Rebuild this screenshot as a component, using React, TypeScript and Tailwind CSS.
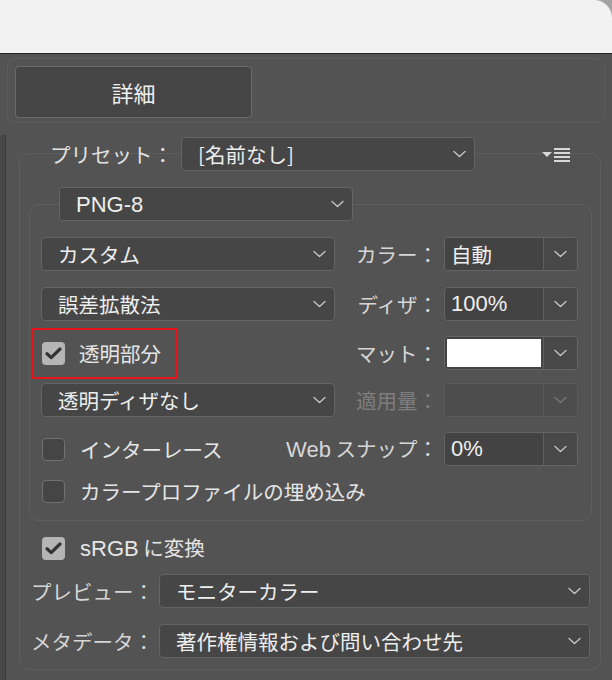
import React from "react";

const L = ({ children }: { children: React.ReactNode }) => (
  <span className="font-['Liberation_Sans',sans-serif] text-[22px]">{children}</span>
);

const Chevron = ({ className = "" }: { className?: string }) => (
  <svg width="13" height="8" viewBox="0 0 13 8" className={className}>
    <path d="M1 1.5 L6.5 6.5 L12 1.5" fill="none" stroke="currentColor" strokeWidth="1.4" strokeLinecap="round" strokeLinejoin="round" />
  </svg>
);

const Dropdown = ({ children, className = "" }: { children: React.ReactNode; className?: string }) => (
  <div className={`h-[34px] shrink-0 flex items-center justify-between bg-[#464646] border border-[#646464] rounded-[4px] pl-[16px] pr-[8px] text-[#eeeeee] ${className}`}>
    <span className="whitespace-nowrap">{children}</span>
    <Chevron className="text-[#c4c4c4]" />
  </div>
);

const Combo = ({ children, disabled = false, white = false }: { children?: React.ReactNode; disabled?: boolean; white?: boolean }) => (
  <div className={`w-[134px] h-[34px] shrink-0 flex rounded-[4px] border ${disabled ? "border-[#5c5c5c]" : "border-[#656565]"}`}>
    <div className={`flex-1 flex items-center rounded-l-[3px] ${disabled ? "bg-[#4d4d4d]" : "bg-[#434343]"} ${white ? "p-[2px]" : "pl-[6px]"} text-[#f0f0f0]`}>
      {white ? <div className="w-full h-full bg-white" /> : children}
    </div>
    <div className={`w-[34px] flex items-center justify-center border-l rounded-r-[3px] ${disabled ? "border-[#5a5a5a] bg-[#4d4d4d] text-[#777777]" : "border-[#5e5e5e] bg-[#484848] text-[#c4c4c4]"}`}>
      <Chevron />
    </div>
  </div>
);

const Checkbox = ({ checked }: { checked: boolean }) =>
  checked ? (
    <div className="w-[23px] h-[23px] shrink-0 rounded-[4px] bg-[#b5b5b5] flex items-center justify-center">
      <svg width="17" height="13" viewBox="0 0 17 13">
        <path d="M2 6.8 L6.2 10.6 L15 2" fill="none" stroke="#333333" strokeWidth="3.2" strokeLinecap="round" strokeLinejoin="round" />
      </svg>
    </div>
  ) : (
    <div className="w-[23px] h-[23px] shrink-0 rounded-[4px] bg-[#454545] border-[1.5px] border-[#707070]" />
  );

const Label = ({ children, disabled = false }: { children: React.ReactNode; disabled?: boolean }) => (
  <div className={`flex-1 text-right pr-[6px] whitespace-nowrap ${disabled ? "text-[#7e7e7e]" : "text-[#d6d6d6]"}`}>{children}</div>
);

export default function App() {
  return (
    <div className="w-[612px] h-[680px] overflow-hidden bg-[#a3a3a3] flex flex-col font-['Noto_Sans_CJK_JP',sans-serif] text-[20.5px] leading-none">
      <div className="h-[54px] shrink-0 bg-[#f2f2f2] rounded-tr-[18px] border-b border-[#262626]" />
      <div className="flex-1 bg-[#535353] flex flex-col">
        <div className="mt-[4px] ml-[7px] w-[598px] h-[65px] shrink-0 border border-[#5b5b5b] rounded-[8px] pl-[7px] pt-[7px]">
          <div className="w-[237px] h-[52px] bg-[#454545] border border-[#6a6a6a] rounded-[4px] text-[#efefef] text-[22px] flex items-center justify-center">
            詳細
          </div>
        </div>
        <div className="flex flex-1 mt-[12px]">
          <div className="w-[6px] shrink-0 bg-[#474747] border-r border-[#3c3c3c]" />
          <div className="ml-[13px] mt-[18px] w-[582px] h-[517px] shrink-0 border border-[#5d5d5d] rounded-[10px] flex flex-col">
            {/* preset row */}
            <div className="-mt-[17px] h-[34px] flex items-center pl-[30px]">
              <div className="w-[131px] shrink-0 text-[#e2e2e2] whitespace-nowrap">プリセット：</div>
              <Dropdown className="w-[294px]">[名前なし]</Dropdown>
              <svg width="28" height="16" viewBox="0 0 28 16" className="ml-[67px] mt-[2px]">
                <polygon points="0,5 10,5 5,10" fill="#d8d8d8" />
                <rect x="12" y="1" width="16" height="2" fill="#d8d8d8" />
                <rect x="12" y="5" width="16" height="2" fill="#d8d8d8" />
                <rect x="12" y="9" width="16" height="2" fill="#d8d8d8" />
                <rect x="12" y="13" width="16" height="2" fill="#d8d8d8" />
              </svg>
            </div>
            {/* inner group */}
            <div className="mt-[33px] ml-[9px] w-[563px] border border-[#5d5d5d] rounded-[10px] flex flex-col pb-[17px]">
              <div className="-mt-[18px] h-[34px] flex pl-[29px]">
                <Dropdown className="w-[294px]"><L>PNG-8</L></Dropdown>
              </div>
              <div className="mt-[16px] h-[34px] flex items-center pl-[11px] pr-[13px]">
                <Dropdown className="w-[294px]">カスタム</Dropdown>
                <Label>カラー：</Label>
                <Combo>自動</Combo>
              </div>
              <div className="mt-[16px] h-[34px] flex items-center pl-[11px] pr-[13px]">
                <Dropdown className="w-[294px]">誤差拡散法</Dropdown>
                <Label>ディザ：</Label>
                <Combo><L>100%</L></Combo>
              </div>
              <div className="mt-[15px] h-[34px] flex items-center pl-[1px] pr-[13px]">
                <div className="w-[146px] h-[51px] shrink-0 border-2 border-[#e8141c] flex items-center pl-[9px]">
                  <Checkbox checked />
                  <span className="ml-[14px] text-[#e6e6e6] whitespace-nowrap">透明部分</span>
                </div>
                <Label>マット：</Label>
                <Combo white />
              </div>
              <div className="mt-[13px] h-[34px] flex items-center pl-[11px] pr-[13px]">
                <Dropdown className="w-[294px]">透明ディザなし</Dropdown>
                <Label disabled>適用量：</Label>
                <Combo disabled />
              </div>
              <div className="mt-[15px] h-[34px] flex items-center pl-[12px] pr-[13px]">
                <Checkbox checked={false} />
                <span className="ml-[15px] text-[#e6e6e6] whitespace-nowrap">インターレース</span>
                <Label><L>Web</L> スナップ：</Label>
                <Combo><L>0%</L></Combo>
              </div>
              <div className="mt-[14px] h-[23px] flex items-center pl-[12px]">
                <Checkbox checked={false} />
                <span className="ml-[15px] text-[#e6e6e6] whitespace-nowrap">カラープロファイルの埋め込み</span>
              </div>
            </div>
            <div className="mt-[16px] h-[23px] flex items-center pl-[22px]">
              <Checkbox checked />
              <span className="ml-[15px] text-[#e6e6e6] whitespace-nowrap"><L>sRGB</L> に変換</span>
            </div>
            <div className="mt-[14px] h-[34px] flex items-center pl-[11px]">
              <div className="w-[128px] shrink-0 text-[#d6d6d6] whitespace-nowrap">プレビュー：</div>
              <Dropdown className="w-[431px]">モニターカラー</Dropdown>
            </div>
            <div className="mt-[16px] h-[34px] flex items-center pl-[11px]">
              <div className="w-[128px] shrink-0 text-[#d6d6d6] whitespace-nowrap">メタデータ：</div>
              <Dropdown className="w-[431px]">著作権情報および問い合わせ先</Dropdown>
            </div>
          </div>
        </div>
      </div>
    </div>
  );
}
